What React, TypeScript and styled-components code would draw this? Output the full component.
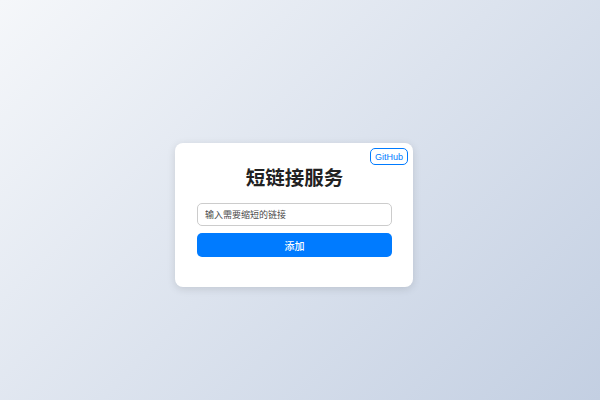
import * as React from 'react';
import styled, { createGlobalStyle } from 'styled-components';

const GlobalStyle = createGlobalStyle`
  html, body {
    margin: 0;
    padding: 0;
    height: 100%;
  }

  body {
    font-family: "Noto Sans", "Noto Sans CJK SC", sans-serif;
    background: linear-gradient(135deg, #f5f7fa 0%, #c3cfe2 100%);
  }
`;

const Page = styled.div`
  box-sizing: border-box;
  display: flex;
  align-items: center;
  justify-content: center;
  min-height: 100vh;
  padding: 30px 12px 0 0;
`;

const Card = styled.div`
  position: relative;
  box-sizing: border-box;
  width: 238px;
  padding: 21px 21px 30px 22px;
  background: #fff;
  border-radius: 8px;
  box-shadow: 0 2px 8px rgba(0, 0, 0, 0.12);
`;

const GitHubLink = styled.a`
  position: absolute;
  top: 5px;
  right: 5px;
  box-sizing: border-box;
  height: 17px;
  padding: 0 4px;
  display: flex;
  align-items: center;
  border: 1px solid #007bff;
  border-radius: 5px;
  color: #007bff;
  font-family: "Liberation Sans", Arial, sans-serif;
  font-size: 9px;
  text-decoration: none;
`;

const Title = styled.h1`
  margin: 0 0 14px;
  text-align: center;
  color: #222;
  font-family: "Noto Sans CJK SC", sans-serif;
  font-size: 19.5px;
  font-weight: 700;
  line-height: 25px;
`;

const Form = styled.form`
  display: flex;
  flex-direction: column;
  gap: 7px;
`;

const Input = styled.input`
  box-sizing: border-box;
  width: 100%;
  height: 23px;
  padding: 0 7px;
  border: 1px solid #ccc;
  border-radius: 5px;
  font-family: "Noto Sans CJK SC", sans-serif;
  font-size: 9px;
  color: #333;
  outline: none;

  &::placeholder {
    color: #4a4a4a;
  }
`;

const Button = styled.button`
  box-sizing: border-box;
  width: 100%;
  height: 24px;
  border: none;
  border-radius: 5px;
  background: #007bff;
  color: #fff;
  font-family: "Noto Sans CJK SC", sans-serif;
  font-size: 10px;
  font-weight: 500;
  cursor: pointer;
`;

const App = (): JSX.Element => (
  <>
    <GlobalStyle />
    <Page>
      <Card>
        <GitHubLink href="#">GitHub</GitHubLink>
        <Title>短链接服务</Title>
        <Form onSubmit={(e) => e.preventDefault()}>
          <Input placeholder="输入需要缩短的链接" />
          <Button type="submit">添加</Button>
        </Form>
      </Card>
    </Page>
  </>
);

export default App;
